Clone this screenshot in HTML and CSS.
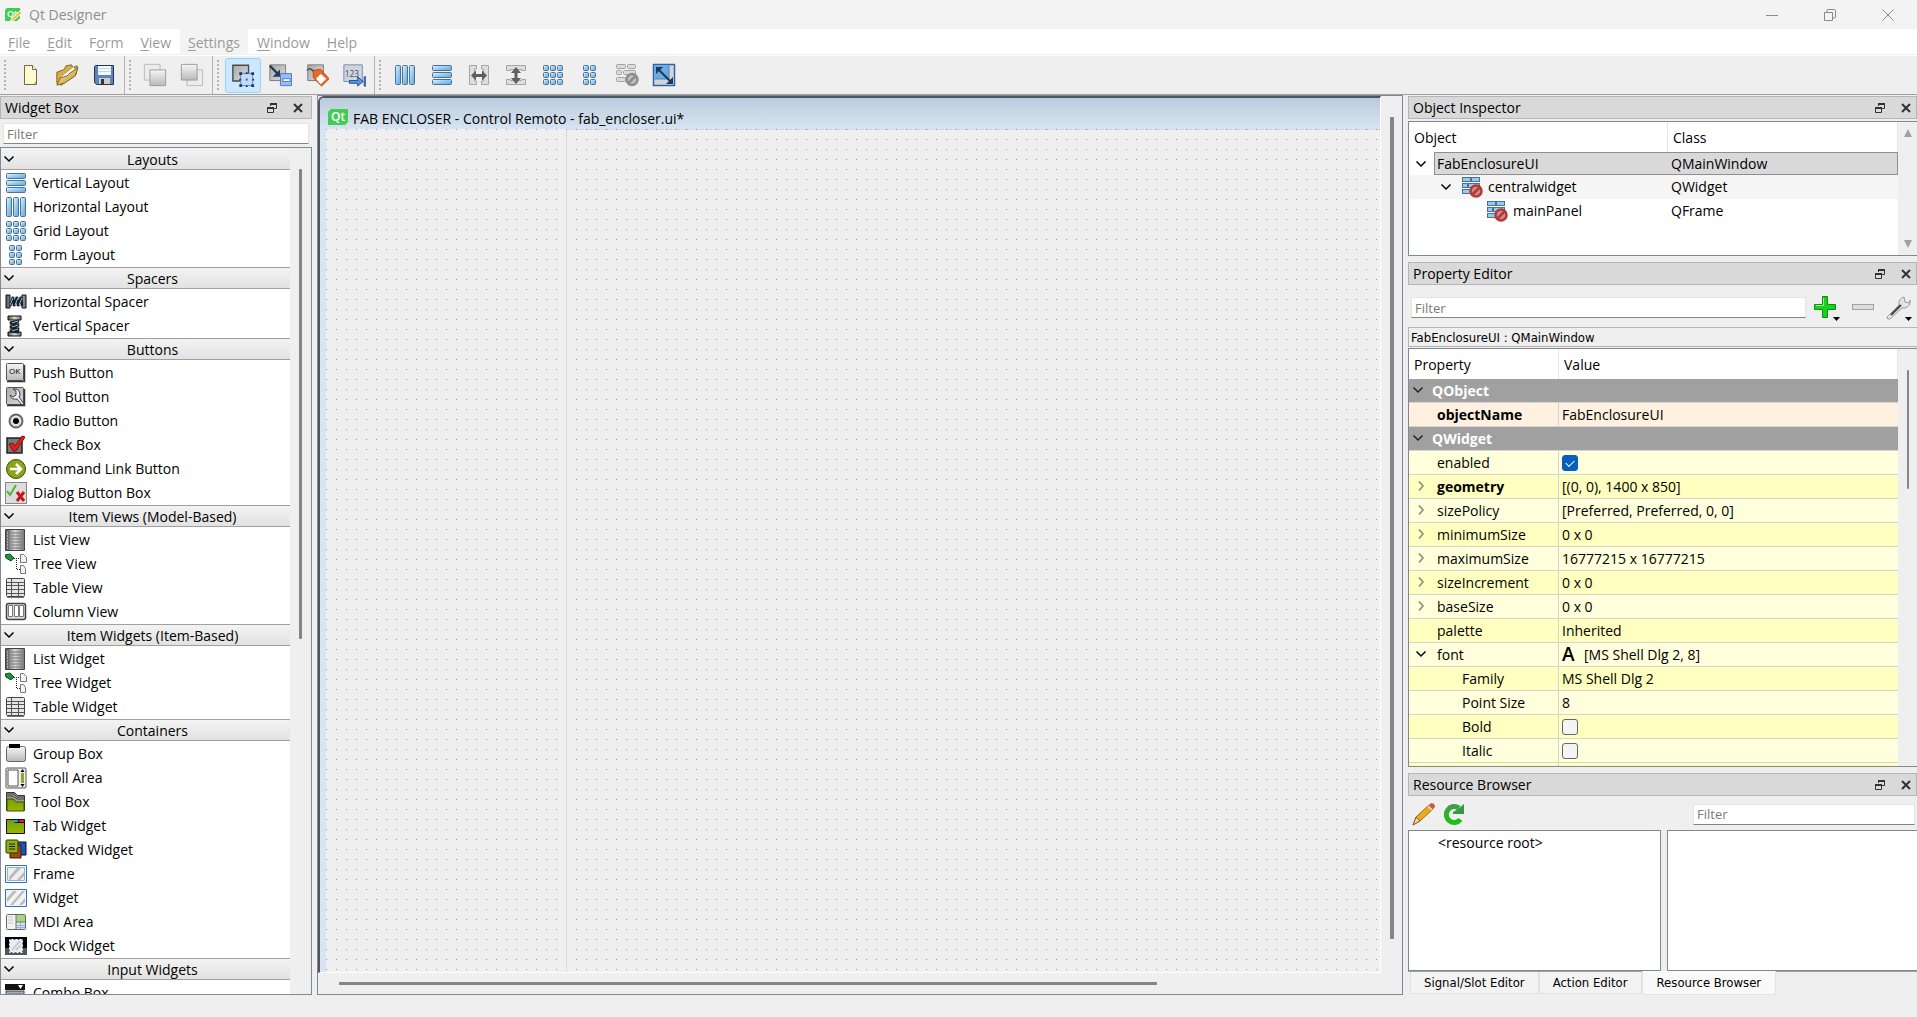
FILE: index.html
```html
<!DOCTYPE html>
<html lang="en">
<head>
<meta charset="utf-8">
<title>Qt Designer</title>
<link rel="stylesheet" href="styles.css">
</head>
<body>
<svg class="sprite" aria-hidden="true">
  <defs>
    <linearGradient id="blue" x1="0" y1="0" x2="1" y2="1"><stop offset="0" stop-color="#e8f7ff"/><stop offset=".5" stop-color="#8dcdf6"/><stop offset="1" stop-color="#6fa3cf"/></linearGradient>
    <linearGradient id="gray" x1="0" y1="0" x2="1" y2="1"><stop offset="0" stop-color="#a9a9a9"/><stop offset="1" stop-color="#dcdcdc"/></linearGradient>
    <linearGradient id="silver" x1="0" y1="0" x2="0" y2="1"><stop offset="0" stop-color="#f6f6f6"/><stop offset="1" stop-color="#b9b9b9"/></linearGradient>
    <linearGradient id="gold" x1="0" y1="0" x2="1" y2="1"><stop offset="0" stop-color="#fff3b0"/><stop offset="1" stop-color="#b98a1e"/></linearGradient>
    <linearGradient id="green" x1="0" y1="0" x2="0" y2="1"><stop offset="0" stop-color="#7d9c00"/><stop offset="1" stop-color="#95b800"/></linearGradient>
    <linearGradient id="emerald" x1="0" y1="0" x2="0" y2="1"><stop offset="0" stop-color="#3f9f49"/><stop offset="1" stop-color="#17c40e"/></linearGradient>
    <linearGradient id="steel" x1="0" y1="0" x2="1" y2="0"><stop offset="0" stop-color="#555"/><stop offset=".5" stop-color="#d8d8d8"/><stop offset="1" stop-color="#777"/></linearGradient>
  </defs>
  <symbol id="i-hbox" viewBox="0 0 22 22"><g fill="url(#blue)" stroke="#536f8f"><rect x="1.5" y="1.5" width="5" height="19" rx="1"/><rect x="8.5" y="1.5" width="5" height="19" rx="1"/><rect x="15.5" y="1.5" width="5" height="19" rx="1"/></g></symbol>
  <symbol id="i-vbox" viewBox="0 0 22 22"><g fill="url(#blue)" stroke="#536f8f"><rect x="1.5" y="1.5" width="19" height="5" rx="1"/><rect x="1.5" y="8.5" width="19" height="5" rx="1"/><rect x="1.5" y="15.5" width="19" height="5" rx="1"/></g></symbol>
  <symbol id="i-grid" viewBox="0 0 22 22"><g fill="url(#blue)" stroke="#536f8f"><rect x="1.5" y="1.5" width="5" height="5" rx="1"/><rect x="8.5" y="1.5" width="5" height="5" rx="1"/><rect x="15.5" y="1.5" width="5" height="5" rx="1"/><rect x="1.5" y="8.5" width="5" height="5" rx="1"/><rect x="8.5" y="8.5" width="5" height="5" rx="1"/><rect x="15.5" y="8.5" width="5" height="5" rx="1"/><rect x="1.5" y="15.5" width="5" height="5" rx="1"/><rect x="8.5" y="15.5" width="5" height="5" rx="1"/><rect x="15.5" y="15.5" width="5" height="5" rx="1"/></g></symbol>
  <symbol id="i-form" viewBox="0 0 22 22"><g fill="url(#blue)" stroke="#536f8f"><rect x="4.5" y="1.5" width="5" height="5" rx="1"/><rect x="11.5" y="1.5" width="5" height="5" rx="1"/><rect x="4.5" y="8.5" width="5" height="5" rx="1"/><rect x="11.5" y="8.5" width="5" height="5" rx="1"/><rect x="4.5" y="15.5" width="5" height="5" rx="1"/><rect x="11.5" y="15.5" width="5" height="5" rx="1"/></g></symbol>
  <symbol id="i-hsplit" viewBox="0 0 22 22"><g fill="#dedede" stroke="#a6a6a6"><path d="M1.5 1.5h7v3.500h-2V17h2v3.500h-7zM20.500 1.500h-7V5h2v12h-2v3.500h7z"/></g><path d="M3 11.500l5-5v3.500h6V6.500l5 5-5 5V13H8v3.500z" fill="#5f5f5f"/></symbol>
  <symbol id="i-vsplit" viewBox="0 0 22 22"><g fill="#dedede" stroke="#a6a6a6"><path d="M1.500 1.500h19v5h-4v-1h-11v1h-4zM1.500 20.500h19v-5h-4v1h-11v-1h-4z"/></g><path d="M11 3l5 6h-3.500v5H16l-5 6-5-6h3.500V9H6z" fill="#5f5f5f"/></symbol>
  <symbol id="i-break" viewBox="0 0 24 24"><g fill="#dcdcdc" stroke="#a3a3a3"><rect x="1.500" y="1.500" width="9" height="4" rx="1"/><rect x="12.500" y="1.500" width="8" height="4" rx="1"/><rect x="1.500" y="7.500" width="5" height="4" rx="1"/><rect x="8.500" y="7.500" width="12" height="4" rx="1"/><rect x="1.500" y="14.500" width="9" height="4" rx="1"/></g><circle cx="17" cy="16.500" r="5.500" fill="#c0c0c0" stroke="#8d8d8d" stroke-width="2.500"/><path d="M13.500 20l7-7" stroke="#8d8d8d" stroke-width="2.500"/></symbol>
  <symbol id="i-nolayout" viewBox="0 0 22 22"><g fill="#8dcdf6" stroke="#536f8f"><rect x="1.500" y="1.500" width="8" height="4"/><rect x="10.500" y="1.500" width="8" height="4"/><rect x="1.500" y="7.500" width="5" height="4"/><rect x="7.500" y="7.500" width="11" height="4"/><rect x="1.500" y="13.500" width="8" height="4"/></g><circle cx="15" cy="15" r="5.500" fill="#cf8a8a" stroke="#b23a36" stroke-width="2.500"/><path d="M11.500 18.500l7-7" stroke="#b23a36" stroke-width="2.500"/></symbol>
  <symbol id="i-adjust" viewBox="0 0 24 24"><rect x="1.500" y="1.500" width="21" height="21" fill="#d2d5d8" stroke="#2f64ad" stroke-width="1.500"/><path d="M2 2h15v14H2z" fill="#6fa9df"/><path d="M17 2v14H2" fill="none" stroke="#4a86c5"/><path d="M6 6l12 12" stroke="#173a5c" stroke-width="2"/><path d="M4 4h7l-7 7zM21 21v-7l-7 7z" fill="#173a5c"/></symbol>
  <symbol id="i-new" viewBox="0 0 24 24"><path d="M6.500 2.500h8l4 4v15h-12z" fill="#fffbcf" stroke="#6f6848"/><path d="M14.500 2.500v4h4" fill="#fff" stroke="#6f6848"/><path d="M16 21l2-3v3z" fill="#c9ad45"/></symbol>
  <symbol id="i-open" viewBox="0 0 26 26"><path d="M2 10l8-3 2-4 6-1 1 3 5-2-1 9-16 12-5-2z" fill="#d9ae3c" stroke="#7d6018"/><path d="M6 15L20 4l2 3L8 18z" fill="#fff" stroke="#999"/><path d="M2 24l4-8 7-2 3-3 9-6-3 9-12 8z" fill="url(#gold)" stroke="#7d6018"/></symbol>
  <symbol id="i-save" viewBox="0 0 22 22"><path d="M1.500 2.500l1-1h18v19h-17l-2-2z" fill="#5b86ba" stroke="#24374f"/><path d="M5 2h13v9H5z" fill="#f3f8ff"/><path d="M5 4.500h13M5 7.500h13" stroke="#c8d4e4"/><path d="M6 14h11v6H6z" fill="#ccc"/><path d="M8 15h3v5H8z" fill="#333"/></symbol>
  <symbol id="i-front" viewBox="0 0 26 26"><path d="M1.500 1.500h17v17h-17z" fill="#ececec" stroke="#b7b7b7"/><path d="M7.500 7.500h17v17h-17z" fill="url(#silver)" stroke="#999"/></symbol>
  <symbol id="i-back" viewBox="0 0 26 26"><path d="M7.500 7.500h17v17h-17z" fill="#ececec" stroke="#b7b7b7"/><path d="M1.500 1.500h17v17h-17z" fill="url(#silver)" stroke="#999"/></symbol>
  <symbol id="i-widgets" viewBox="0 0 26 26"><path d="M2 2.500h17v17H2z" fill="url(#gray)" stroke="#4a4a4a" stroke-width="1.500"/><path d="M10.500 11.500h13v13h-13z" fill="#c5daff" stroke="#5583cb"/><path d="M9 10h3v3H9zM16 10h2v2h-2zM22 10h3v3h-3zM9 17h2v2H9zM23 17h2v2h-2zM9 23h3v3H9zM16 24h2v2h-2zM22 23h3v3h-3z" fill="#173a66"/><path d="M16 17h2v2h-2z" fill="#2852d0"/></symbol>
  <symbol id="i-signals" viewBox="0 0 26 26"><path d="M2 2h17v17H2z" fill="url(#gray)" stroke="#777"/><path d="M2 3l9 9" stroke="#223a53" stroke-width="2.500"/><path d="M13 7v8H5z" fill="#223a53"/><path d="M13.500 11.500h12v13h-12z" fill="#9bbdf5" stroke="#4674c5"/><path d="M16 17h8v3h-8z" fill="#fff" stroke="#4674c5"/></symbol>
  <symbol id="i-buddies" viewBox="0 0 26 26"><path d="M3 2h17v17H3z" fill="url(#gray)" stroke="#777"/><path d="M2 8q4-4 8 2" fill="none" stroke="#444" stroke-width="1.500"/><path d="M9 8l8-1 9 10-8 8-9-9z" fill="#ee6a24" stroke="#a9401b"/><path d="M12 17l5-5 6 5-6 6z" fill="#fff"/></symbol>

  <symbol id="i-hspacer" viewBox="0 0 22 22"><path d="M1 4h4v13H1zM17 4h4v13h-4z" fill="url(#steel)" stroke="#111"/><path d="M5 15l3-9 1 9 3-9 1 9 3-9 1 9" fill="none" stroke="#14202a" stroke-width="2.500"/><path d="M5 14l3-7M10 14l3-7M14 14l3-7" stroke="#94bfd8"/></symbol>
  <symbol id="i-vspacer" viewBox="0 0 22 22"><path d="M3 1h13v4H3zM3 17h13v4H3z" fill="url(#steel)" stroke="#111"/><path d="M14 6L5 8l9 2-9 2 9 2-9 2 9 1" fill="none" stroke="#14202a" stroke-width="3"/><path d="M13 6L7 8M13 10l-6 2M13 14l-6 2" stroke="#94bfd8"/></symbol>
  <symbol id="i-tool" viewBox="0 0 22 22"><rect x="1.500" y="1.500" width="17" height="17" rx="1" fill="url(#gray)" stroke="#555"/><path d="M2 19.500h17.500V3" fill="none" stroke="#333" stroke-width="1.500"/><path d="M8 3q7-1 7 6l-1 2 5 7-2 1-5-6q-6 1-7-4l3 2 3-2 0-4z" fill="#eef2f5" stroke="#38434e"/></symbol>
  <symbol id="i-radio" viewBox="0 0 22 22"><circle cx="11" cy="11" r="6.500" fill="#e2e2e2" stroke="#666" stroke-width="2"/><circle cx="11" cy="11" r="3" fill="#000"/></symbol>
  <symbol id="i-check" viewBox="0 0 22 22"><path d="M2 4h15v15H2z" fill="#777" stroke="#222" stroke-width="1.500"/><path d="M4 10l4-1 2 3 7-10 3 1-9 14H8z" fill="#df2020" stroke="#8c0c0c"/></symbol>
  <symbol id="i-command" viewBox="0 0 22 22"><circle cx="11" cy="11" r="9.500" fill="#8aa51a" stroke="#3b4b0a"/><path d="M5 11h10M11 6l5 5-5 5" fill="none" stroke="#fff" stroke-width="2.500"/></symbol>
  <symbol id="i-dialog" viewBox="0 0 22 22"><rect x=".5" y=".5" width="21" height="21" fill="#ddd" stroke="#888"/><path d="M2 9l3 4 6-10" fill="none" stroke="#55b62b" stroke-width="2"/><path d="M12 10l7 9M19 10l-7 9" stroke="#c5161d" stroke-width="3"/></symbol>
  <symbol id="i-list" viewBox="0 0 22 22"><path d="M.5.5h19v21H.5z" fill="url(#steel)" stroke="#444"/><path d="M4 1v20" stroke="#666"/><path d="M6 4h12M6 7h12M6 10h12M6 13h12M6 16h12M6 19h12" stroke="#777"/><path d="M2 4h1M2 7h1M2 10h1M2 13h1M2 16h1M2 19h1" stroke="#eee"/></symbol>
  <symbol id="i-tree" viewBox="0 0 22 22"><path d="M0 2l5-1 4 4-3 3-5-3z" fill="#22933a" stroke="#0c501b"/><path d="M9 5.500h5M11.500 7v9M12 16.500h3" stroke="#222" stroke-dasharray="1 1"/><path d="M15.500 1.500h3l3 3v5h-6zM15.500 12.500h3l2 3v5h-5z" fill="#f5f5f5" stroke="#777"/></symbol>
  <symbol id="i-table" viewBox="0 0 22 22"><rect x="1.500" y="1.500" width="18" height="18" rx="1" fill="#e6e6e6" stroke="#444"/><path d="M2 5.500h17M2 8.500h17M2 12.500h17M2 16.500h17M6.500 2v18M13.500 5v14" stroke="#555"/><path d="M2 20.500h17" stroke="#777"/></symbol>
  <symbol id="i-column" viewBox="0 0 22 22"><rect x="1.500" y="2.500" width="19" height="16" rx="2" fill="#ddd" stroke="#444" stroke-width="1.500"/><path d="M3.500 4.500h4v11h-4zM9.500 4.500h4v11h-4zM14.500 4.500h4v11h-4z" fill="#fff" stroke="#777"/></symbol>
  <symbol id="i-group" viewBox="0 0 22 22"><rect x="1.500" y="3.500" width="19" height="15" rx="2" fill="url(#silver)" stroke="#666"/><path d="M4 1h11v4H4z" fill="#000"/></symbol>
  <symbol id="i-scroll" viewBox="0 0 22 22"><rect x="1" y="1" width="20" height="20" rx="1" fill="#eee" stroke="#555"/><path d="M3 3h10v16H3z" fill="#fff" stroke="#555"/><path d="M16 6h3v10h-3z" fill="#8eaa16"/><path d="M17.500 2l2 3h-4zM17.500 20l2-3h-4z" fill="#000"/></symbol>
  <symbol id="i-toolbox" viewBox="0 0 22 22"><path d="M1.500 1.500h8l3 3h7v15h-18z" fill="#999" stroke="#333"/><path d="M2 5h6l4 3h7M2 3h7l3 3h7" fill="none" stroke="#444"/><path d="M2 8h6l3 3h8v9H2z" fill="url(#green)" stroke="#3f5000"/></symbol>
  <symbol id="i-tab" viewBox="0 0 22 22"><path d="M1.500 4.500h18v14h-18z" fill="#111" stroke="#111"/><path d="M2 5h6l2 3h9v10H2z" fill="url(#green)"/><path d="M8 5h5v2H8z" fill="#1fa3e8"/><path d="M14 5h5v2h-5z" fill="#e2231a"/></symbol>
  <symbol id="i-stacked" viewBox="0 0 22 22"><path d="M10 3h11v13H10z" fill="#1754c4" stroke="#111"/><path d="M5 6h11v13H5z" fill="#b0430d" stroke="#222"/><rect x="1" y="1" width="12" height="13" rx="1" fill="#8fae10" stroke="#2f3b00"/><path d="M4 5h6M4 7.500h6M4 10h6" stroke="#222"/></symbol>
  <symbol id="i-frame" viewBox="0 0 22 22"><path d="M.5 2.500h21v17H.5z" fill="#fff" stroke="#2e6fbf"/><path d="M2.500 4.500h17v13h-17z" fill="#eee" stroke="#8db2df"/><path d="M4 14l8-9h4L5 17H4zM12 17l7-8v4l-4 4z" fill="#bbb"/></symbol>
  <symbol id="i-widget" viewBox="0 0 22 22"><path d="M.5 2.500h21v17H.5z" fill="#f2f2f2" stroke="#2e6fbf"/><path d="M2 11l6-7h4L2 15zM5 18L17 4h3L8 18zM14 18l6-7v4l-3 3z" fill="#bbb"/></symbol>
  <symbol id="i-mdi" viewBox="0 0 22 22"><path d="M11 4h9v7h-9z" fill="#a8d67e"/><path d="M2 4h9v14H2z" fill="#f2f2f2"/><path d="M11 11h9v7h-9z" fill="#d5e3f7"/><path d="M3 6h5M3 9h5M3 12h5" stroke="#c4c4c4"/><path d="M11 14.500h9M11 16.500h9M15.500 11v7" stroke="#9db4cc"/><path d="M11 4v14M11 11h9" stroke="#777"/><rect x="1.500" y="3.500" width="19" height="15" rx="1" fill="none" stroke="#666"/></symbol>
  <symbol id="i-dock" viewBox="0 0 22 22"><path d="M0 2h22v18H0z" fill="#000"/><path d="M0 13h22v7H0z" fill="#555"/><path d="M4.500 4.500h13v13h-13z" fill="#eee" stroke="#fff"/><path d="M4.500 4.500h13v13h-13z" fill="none" stroke="#2e6fbf" stroke-dasharray="2 2"/><path d="M7 15l8-9M11 15l5-5" stroke="#ccc" stroke-width="2"/></symbol>
  <symbol id="i-combo" viewBox="0 0 22 22"><path d="M0 2h20v6H0z" fill="#111"/><path d="M13 3h5l-2.500 4z" fill="#fff"/><path d="M1 9h18v12H1z" fill="#aaa" stroke="#444"/><path d="M4 11h13v9H4z" fill="#6c95cc"/></symbol>

  <symbol id="i-down" viewBox="0 0 12 12"><path d="M1.500 3.500L6 8l4.500-4.500" fill="none" stroke="currentColor" stroke-width="1.500"/></symbol>
  <symbol id="i-right" viewBox="0 0 12 12"><path d="M4 1.500L8 6l-4 4.500" fill="none" stroke="#858585" stroke-width="1.500"/></symbol>
  <symbol id="i-float" viewBox="0 0 12 12"><path d="M4.500 4V1.500h6v5H8" fill="none" stroke="#333"/><path d="M4 1h7v2H4z" fill="#333"/><path d="M1.500 5.500h6v5h-6z" fill="#ddd" stroke="#333"/><path d="M1 5h7v2H1z" fill="#333"/></symbol>
  <symbol id="i-close" viewBox="0 0 12 12"><path d="M2 2l8 8M10 2l-8 8" stroke="#333" stroke-width="2"/></symbol>
  <symbol id="i-plus" viewBox="0 0 26 26"><path d="M8.500 1.500h5v8h8v5h-8v8h-5v-8h-8v-5h8z" fill="#17d31c" stroke="#0b8e12"/><path d="M9.500 3v7.500H2" fill="none" stroke="#8df58d"/><path d="M19 22h7l-3.500 4z" fill="#000"/></symbol>
  <symbol id="i-minus" viewBox="0 0 26 26"><rect x="2.500" y="9.500" width="21" height="5" fill="#ddd" stroke="#a3a3a3"/></symbol>
  <symbol id="i-wrench" viewBox="0 0 26 26"><path d="M1 22L13 10q-1-6 5-8l1 5 4 1 1-3q1 6-5 8l-3 0L4 24q-3 1-3-2z" fill="#e4e4e4" stroke="#9a9a9a"/><path d="M5 20L15 10" stroke="#444" stroke-width="2"/><path d="M19 22h7l-3.500 4z" fill="#000"/></symbol>
  <symbol id="i-pencil" viewBox="0 0 24 24"><path d="M1 23l3-8L17 3l4 4L8 19z" fill="#f3a521" stroke="#a26a12"/><path d="M1 23l3-8 4 4z" fill="#ecd3a4" stroke="#87653a"/><path d="M17 3l2-2q4 0 4 4l-2 2z" fill="#cf5a3c"/><path d="M16 4l4 4" stroke="#ddd" stroke-width="1.500"/></symbol>
  <symbol id="i-reload" viewBox="0 0 24 24"><path d="M18.500 17.500A8 8 0 1 1 17 6" fill="none" stroke="url(#emerald)" stroke-width="5"/><path d="M22 2v10H11v-2l5-3z" fill="#38993f"/></symbol>
</svg>

<header class="titlebar">
  <svg class="app-icon" viewBox="0 0 18 16"><path d="M3 1h13v10l-3 3H1V3z" fill="#41cd52"/><text x="3" y="10" class="glyph-app">Qt</text><path d="M6 15l2-4 8-7 2 2-8 7z" fill="#f2c230" stroke="#fff"/></svg>
  <h1>Qt Designer</h1>
  <div class="window-buttons">
    <button type="button" aria-label="Minimize"><svg viewBox="0 0 12 12"><path d="M0 6.500h12"/></svg></button>
    <button type="button" aria-label="Restore"><svg viewBox="0 0 12 12"><path d="M.5 3.500h8v8h-8zM3 3V1.500q0-1 1-1h6.500q1 0 1 1V8q0 1-1 1H9"/></svg></button>
    <button type="button" aria-label="Close"><svg viewBox="0 0 12 12"><path d="M.5.5l11 11M11.500.5l-11 11"/></svg></button>
  </div>
</header>
<nav class="menubar">
  <button type="button"><u>F</u>ile</button>
  <button type="button"><u>E</u>dit</button>
  <button type="button">F<u>o</u>rm</button>
  <button type="button"><u>V</u>iew</button>
  <button type="button" class="hover"><u>S</u>ettings</button>
  <button type="button"><u>W</u>indow</button>
  <button type="button"><u>H</u>elp</button>
</nav>
<div class="toolbar">
  <div class="tools">
    <button type="button" aria-label="New"><svg><use href="#i-new"/></svg></button>
    <button type="button" aria-label="Open"><svg><use href="#i-open"/></svg></button>
    <button type="button" aria-label="Save"><svg class="small"><use href="#i-save"/></svg></button>
  </div>
  <div class="tools">
    <button type="button" aria-label="Bring to Front"><svg><use href="#i-front"/></svg></button>
    <button type="button" aria-label="Send to Back"><svg><use href="#i-back"/></svg></button>
  </div>
  <div class="tools">
    <button type="button" class="active" aria-label="Edit Widgets"><svg><use href="#i-widgets"/></svg></button>
    <button type="button" aria-label="Edit Signals/Slots"><svg><use href="#i-signals"/></svg></button>
    <button type="button" aria-label="Edit Buddies"><svg><use href="#i-buddies"/></svg></button>
    <button type="button" aria-label="Edit Tab Order"><svg viewBox="0 0 26 26"><path d="M2 2h20v18H2z" fill="#d4d4d4" stroke="#6a8bbd"/><text x="3" y="15" class="glyph-num">123</text><path d="M8 19h9v-4l6 5-6 5v-3H8zM24 15h2v10h-2z" fill="#5b93df" stroke="#20498c"/></svg></button>
  </div>
  <div class="tools last">
    <button type="button" aria-label="Lay Out Horizontally"><svg class="small"><use href="#i-hbox"/></svg></button>
    <button type="button" aria-label="Lay Out Vertically"><svg class="small"><use href="#i-vbox"/></svg></button>
    <button type="button" aria-label="Horizontal Splitter"><svg class="small"><use href="#i-hsplit"/></svg></button>
    <button type="button" aria-label="Vertical Splitter"><svg class="small"><use href="#i-vsplit"/></svg></button>
    <button type="button" aria-label="Lay Out in a Grid"><svg class="small"><use href="#i-grid"/></svg></button>
    <button type="button" aria-label="Lay Out in a Form"><svg class="small"><use href="#i-form"/></svg></button>
    <button type="button" aria-label="Break Layout"><svg><use href="#i-break"/></svg></button>
    <button type="button" aria-label="Adjust Size"><svg><use href="#i-adjust"/></svg></button>
  </div>
</div>

<main class="workspace">
  <aside class="dock dock-left">
    <div class="dock-title"><h2>Widget Box</h2><button type="button" aria-label="Float"><svg><use href="#i-float"/></svg></button><button type="button" aria-label="Close"><svg><use href="#i-close"/></svg></button></div>
    <input class="filter" type="text" placeholder="Filter" aria-label="Filter widgets">
    <div class="widget-box">
      <div class="widget-list">
        <section>
          <button type="button" class="category"><svg><use href="#i-down"/></svg><span>Layouts</span></button>
          <ul><li><svg><use href="#i-vbox"/></svg>Vertical Layout</li><li><svg><use href="#i-hbox"/></svg>Horizontal Layout</li><li><svg><use href="#i-grid"/></svg>Grid Layout</li><li><svg><use href="#i-form"/></svg>Form Layout</li></ul>
        </section>
        <section>
          <button type="button" class="category"><svg><use href="#i-down"/></svg><span>Spacers</span></button>
          <ul><li><svg><use href="#i-hspacer"/></svg>Horizontal Spacer</li><li><svg><use href="#i-vspacer"/></svg>Vertical Spacer</li></ul>
        </section>
        <section>
          <button type="button" class="category"><svg><use href="#i-down"/></svg><span>Buttons</span></button>
          <ul><li><svg viewBox="0 0 22 22" aria-hidden="true"><rect x="1.500" y="1.500" width="17" height="17" rx="1" fill="url(#silver)" stroke="#555"/><path d="M2 19.500h17.500V3" fill="none" stroke="#333" stroke-width="1.500"/><text x="4" y="12" class="glyph-ok">OK</text></svg>Push Button</li><li><svg><use href="#i-tool"/></svg>Tool Button</li><li><svg><use href="#i-radio"/></svg>Radio Button</li><li><svg><use href="#i-check"/></svg>Check Box</li><li><svg><use href="#i-command"/></svg>Command Link Button</li><li><svg><use href="#i-dialog"/></svg>Dialog Button Box</li></ul>
        </section>
        <section>
          <button type="button" class="category"><svg><use href="#i-down"/></svg><span>Item Views (Model-Based)</span></button>
          <ul><li><svg><use href="#i-list"/></svg>List View</li><li><svg><use href="#i-tree"/></svg>Tree View</li><li><svg><use href="#i-table"/></svg>Table View</li><li><svg><use href="#i-column"/></svg>Column View</li></ul>
        </section>
        <section>
          <button type="button" class="category"><svg><use href="#i-down"/></svg><span>Item Widgets (Item-Based)</span></button>
          <ul><li><svg><use href="#i-list"/></svg>List Widget</li><li><svg><use href="#i-tree"/></svg>Tree Widget</li><li><svg><use href="#i-table"/></svg>Table Widget</li></ul>
        </section>
        <section>
          <button type="button" class="category"><svg><use href="#i-down"/></svg><span>Containers</span></button>
          <ul><li><svg><use href="#i-group"/></svg>Group Box</li><li><svg><use href="#i-scroll"/></svg>Scroll Area</li><li><svg><use href="#i-toolbox"/></svg>Tool Box</li><li><svg><use href="#i-tab"/></svg>Tab Widget</li><li><svg><use href="#i-stacked"/></svg>Stacked Widget</li><li><svg><use href="#i-frame"/></svg>Frame</li><li><svg><use href="#i-widget"/></svg>Widget</li><li><svg><use href="#i-mdi"/></svg>MDI Area</li><li><svg><use href="#i-dock"/></svg>Dock Widget</li></ul>
        </section>
        <section>
          <button type="button" class="category"><svg><use href="#i-down"/></svg><span>Input Widgets</span></button>
          <ul><li><svg><use href="#i-combo"/></svg>Combo Box</li></ul>
        </section>
      </div>
      <div class="scroll-v scroll-widgets"><div class="thumb"></div></div>
    </div>
  </aside>

  <section class="mdi">
    <div class="form-window">
      <div class="form-title"><svg viewBox="0 0 20 16"><path d="M3 0h17v13l-3 3H0V3z" fill="#41cd52"/><text x="3" y="12" class="glyph-qt">Qt</text></svg><h2>FAB ENCLOSER - Control Remoto - fab_encloser.ui*</h2></div>
      <div class="form-canvas"><div class="main-panel"></div></div>
    </div>
    <div class="scroll-v scroll-form"><div class="thumb"></div></div>
    <div class="scroll-h"><div class="thumb"></div></div>
  </section>

  <aside class="dock dock-right">
    <section class="inspector">
      <div class="dock-title"><h2>Object Inspector</h2><button type="button" aria-label="Float"><svg><use href="#i-float"/></svg></button><button type="button" aria-label="Close"><svg><use href="#i-close"/></svg></button></div>
      <div class="view">
        <table class="objects">
          <thead><tr><th>Object</th><th>Class</th></tr></thead>
          <tbody>
            <tr class="selected"><td><div class="node"><svg class="arrow"><use href="#i-down"/></svg><span>FabEnclosureUI</span></div></td><td>QMainWindow</td></tr>
            <tr class="alt"><td><div class="node level-1"><svg class="arrow"><use href="#i-down"/></svg><svg class="kind"><use href="#i-nolayout"/></svg><span>centralwidget</span></div></td><td>QWidget</td></tr>
            <tr><td><div class="node level-2"><svg class="kind"><use href="#i-nolayout"/></svg><span>mainPanel</span></div></td><td>QFrame</td></tr>
          </tbody>
        </table>
        <div class="scroll-v scroll-arrows"><svg viewBox="0 0 8 8"><path d="M4 0l4 8H0z"/></svg><svg viewBox="0 0 8 8"><path d="M4 8l4-8H0z"/></svg></div>
      </div>
    </section>
    <section class="properties">
      <div class="dock-title"><h2>Property Editor</h2><button type="button" aria-label="Float"><svg><use href="#i-float"/></svg></button><button type="button" aria-label="Close"><svg><use href="#i-close"/></svg></button></div>
      <div class="property-tools">
        <input class="filter" type="text" placeholder="Filter" aria-label="Filter properties">
        <button type="button" aria-label="Add dynamic property"><svg><use href="#i-plus"/></svg></button>
        <button type="button" aria-label="Remove dynamic property"><svg><use href="#i-minus"/></svg></button>
        <button type="button" aria-label="Configure property editor"><svg><use href="#i-wrench"/></svg></button>
      </div>
      <p class="object-label">FabEnclosureUI : QMainWindow</p>
      <div class="view">
        <table class="props">
          <thead><tr><th>Property</th><th>Value</th></tr></thead>
          <tbody>
            <tr class="group"><th colspan="2"><svg><use href="#i-down"/></svg>QObject</th></tr>
            <tr class="peach changed"><td>objectName</td><td>FabEnclosureUI</td></tr>
            <tr class="group"><th colspan="2"><svg><use href="#i-down"/></svg>QWidget</th></tr>
            <tr><td><label for="p-enabled">enabled</label></td><td><input type="checkbox" id="p-enabled" checked></td></tr>
            <tr class="deep changed"><td><svg><use href="#i-right"/></svg>geometry</td><td>[(0, 0), 1400 x 850]</td></tr>
            <tr><td><svg><use href="#i-right"/></svg>sizePolicy</td><td>[Preferred, Preferred, 0, 0]</td></tr>
            <tr class="deep"><td><svg><use href="#i-right"/></svg>minimumSize</td><td>0 x 0</td></tr>
            <tr><td><svg><use href="#i-right"/></svg>maximumSize</td><td>16777215 x 16777215</td></tr>
            <tr class="deep"><td><svg><use href="#i-right"/></svg>sizeIncrement</td><td>0 x 0</td></tr>
            <tr><td><svg><use href="#i-right"/></svg>baseSize</td><td>0 x 0</td></tr>
            <tr class="deep"><td>palette</td><td>Inherited</td></tr>
            <tr><td><svg><use href="#i-down"/></svg>font</td><td><span class="font-sample">A</span>[MS Shell Dlg 2, 8]</td></tr>
            <tr class="deep sub"><td>Family</td><td>MS Shell Dlg 2</td></tr>
            <tr class="sub"><td>Point Size</td><td>8</td></tr>
            <tr class="deep sub"><td><label for="p-bold">Bold</label></td><td><input type="checkbox" id="p-bold"></td></tr>
            <tr class="sub"><td><label for="p-italic">Italic</label></td><td><input type="checkbox" id="p-italic"></td></tr>
            <tr class="deep sub"><td></td><td></td></tr>
          </tbody>
        </table>
        <div class="scroll-v scroll-props"><div class="thumb"></div></div>
      </div>
    </section>
    <section class="resources">
      <div class="dock-title"><h2>Resource Browser</h2><button type="button" aria-label="Float"><svg><use href="#i-float"/></svg></button><button type="button" aria-label="Close"><svg><use href="#i-close"/></svg></button></div>
      <div class="resource-tools">
        <button type="button" aria-label="Edit Resources"><svg><use href="#i-pencil"/></svg></button>
        <button type="button" aria-label="Reload"><svg><use href="#i-reload"/></svg></button>
        <input class="filter" type="text" placeholder="Filter" aria-label="Filter resources">
      </div>
      <div class="resource-panes"><div class="pane">&lt;resource root&gt;</div><div class="pane"></div></div>
      <div class="tabs">
        <button type="button">Signal/Slot Editor</button><button type="button">Action Editor</button><button type="button" class="current">Resource Browser</button>
      </div>
    </section>
  </aside>
</main>
</body>
</html>
```
FILE: styles.css
```css
* { box-sizing: border-box; }

body {
  margin: 0;
  height: 100vh;
  display: flex;
  flex-direction: column;
  overflow: hidden;
  background: #efefef;
  color: #000;
  font: 14px/22px "Open Sans", "Noto Sans", sans-serif;
}

h1, h2, p, ul { margin: 0; padding: 0; }
h1, h2 { font-size: 14px; font-weight: 400; }
ul { list-style: none; }
button { padding: 0; border: 0; background: none; color: inherit; font: inherit; }
svg { flex: none; display: block; }
.sprite { position: absolute; width: 0; height: 0; }

.glyph-num { font: 9px "Open Sans", sans-serif; fill: #1d4c9a; }
.glyph-ok { font: 8px "Open Sans", sans-serif; fill: #000; }
.glyph-qt { font: 600 12px "Open Sans", sans-serif; fill: #fff; }
.glyph-app { font: 600 9px "Open Sans", sans-serif; fill: #fff; }

/* Title bar and menus */
.titlebar { flex: none; height: 29px; display: flex; align-items: center; gap: 7px; padding-left: 4px; background: #f3f3f3; color: #8f8f8f; }
.app-icon { width: 18px; height: 16px; }
.window-buttons { margin-left: auto; display: flex; }
.window-buttons button { width: 58px; height: 28px; display: grid; place-items: center; }
.window-buttons svg { width: 12px; height: 12px; fill: none; stroke: #8a8a8a; }

.menubar { flex: none; height: 26px; display: flex; gap: 1px; background: #fff; border-bottom: 1px solid #f0f0f0; color: #9a9a9a; }
.menubar button { padding: 2px 8px 0; }
.menubar .hover { background: #f3f3f3; border-radius: 3px; }
.menubar u { text-underline-offset: 2px; }

/* Tool bar */
.toolbar { flex: none; height: 40px; display: flex; border-top: 1px solid #fff; border-bottom: 1px solid #a0a0a0; }
.tools { display: flex; align-items: center; gap: 1px; padding: 0 2px 0 4px; border-right: 1px solid #b4b4b4; }
.tools.last { border-right: 0; }
.tools::before { content: ""; width: 0; height: 30px; margin-right: 5px; border-left: 2px dotted #b4b4b4; }
.tools button { width: 36px; height: 35px; display: grid; place-items: center; border: 1px solid transparent; border-radius: 3px; }
.tools .active { background: #cce8ff; border-color: #99d1ff; }
.tools svg { width: 24px; height: 24px; }
.tools .small { width: 22px; height: 22px; }

/* Docks */
.workspace { flex: 1; min-height: 0; display: flex; gap: 5px; margin-bottom: 22px; }
.dock { flex: none; display: flex; flex-direction: column; padding-top: 1px; }
.dock-left { width: 312px; }
.dock-right { width: 509px; gap: 6px; }
.dock-title { flex: none; height: 23px; display: flex; align-items: center; background: #d9d9d9; border: 1px solid #b5b5b5; padding: 0 6px 0 4px; }
.dock-right .dock-title { padding-right: 3px; }
.dock-title h2 { flex: 1; padding-top: 1px; }
.dock-title button { width: 14px; height: 14px; display: grid; place-items: center; margin-left: 12px; }
.dock-title svg { width: 12px; height: 12px; }
.filter { height: 21px; padding: 0 3px; border: 1px solid #e4e4e4; border-bottom: 1px solid #858585; background: #fff; font: 13px/18px "Open Sans", sans-serif; }
.filter::placeholder { color: #7a7a7a; opacity: 1; }
.view { flex: 1; min-height: 0; display: flex; border: 1px solid #828790; border-right: 0; overflow: hidden; background: #fff; }

.scroll-v { flex: none; width: 21px; background: #efefef; display: flex; flex-direction: column; align-items: center; }
.dock-right .scroll-v { width: 19px; }
.thumb { background: #858585; border-radius: 1px; }

/* Widget box */
.dock-left .filter { margin: 4px 3px 3px; }
.widget-box { flex: 1; min-height: 0; display: flex; border: 1px solid #828790; background: #fff; overflow: hidden; }
.widget-list { flex: 1; overflow: hidden; }
.category { width: 100%; height: 22px; margin-bottom: 1px; display: flex; align-items: center; padding-left: 2px; background: linear-gradient(#f3f3f3, #e2e2e2); border-top: 1px solid #a0a0a0; border-bottom: 1px solid #a0a0a0; line-height: 20px; }
section:first-child > .category { border-top-color: #f3f3f3; }
.category span { flex: 1; padding-top: 1px; }
.category svg { width: 12px; height: 12px; }
.widget-list li { height: 24px; display: flex; align-items: center; gap: 6px; padding-left: 4px; }
.widget-list li svg { width: 22px; height: 22px; }
.scroll-widgets { padding-top: 21px; }
.scroll-widgets .thumb { width: 3px; height: 57%; }

/* Form window */
.mdi { flex: 1; min-width: 0; display: grid; grid-template: minmax(0, 1fr) 21px / minmax(0, 1fr) 21px; border: 1px solid #828790; }
.form-window { display: flex; flex-direction: column; border-top: 2px solid #4d5560; border-left: 2px solid #4d5560; border-right: 1px solid #fff; border-bottom: 1px solid #fff; border-radius: 6px 0 0 0; background: #d7e4f2; padding-left: 6px; overflow: hidden; }
.form-title { flex: none; height: 31px; display: flex; align-items: flex-end; gap: 5px; margin-left: -6px; padding: 0 8px 0 8px; background: linear-gradient(#bccbdb, #d7e4f2); }
.form-title svg { width: 20px; height: 16px; margin-bottom: 4px; }
.form-title h2 { line-height: 20px; }
.form-canvas { flex: 1; padding-left: 240px; background: conic-gradient(at 1px 1px, transparent 270deg, #999 0) 0 0 / 10px 10px #efefef; }
.main-panel { height: 100%; border-left: 1px dotted #c4c4c4; border-top: 1px dotted #c4c4c4; }
.scroll-form { padding-top: 21px; }
.scroll-form .thumb { width: 4px; height: 96%; }
.scroll-h { grid-column: 1; padding: 9px 224px 0 21px; }
.scroll-h .thumb { height: 3px; }

/* Object inspector */
.inspector { height: 160px; display: flex; flex-direction: column; gap: 2px; }
table { flex: 1; border-collapse: separate; border-spacing: 0; table-layout: fixed; align-self: flex-start; }
th, td { padding: 0; font-weight: 400; text-align: left; overflow: hidden; white-space: nowrap; }
thead th { height: 30px; padding: 2px 0 0 5px; border-right: 1px solid #e4e4e4; }
.objects th:first-child { width: 259px; }
.objects td { height: 24px; padding-left: 3px; line-height: 24px; }
.objects td:first-child { padding-left: 0; }
.objects .selected td { height: 22px; background: #d9d9d9; border: solid #8f8f8f; border-width: 1px 1px 1px 0; line-height: 21px; }
.objects .selected td:first-child { background: none; border: 0; }
.selected span { flex: 1; height: 23px; background: #d9d9d9; border: solid #8f8f8f; border-width: 1px 0 1px 1px; padding-left: 2px; }
.alt td { background: #f5f5f5; }
.node { display: flex; align-items: center; padding-left: 6px; }
.node .arrow { width: 12px; height: 12px; margin-right: 7px; }
.node .kind { width: 22px; height: 22px; margin: 0 5px 0 7px; }
.level-1 { padding-left: 31px; }
.level-1 .arrow { margin-right: 2px; }
.level-2 { padding-left: 70px; }
.scroll-arrows { justify-content: space-between; padding: 7px 0; }
.scroll-arrows svg { width: 8px; height: 8px; fill: #a0a0a0; }

/* Property editor */
.properties { flex: 1; min-height: 0; display: flex; flex-direction: column; }
.property-tools { height: 42px; display: flex; align-items: center; gap: 10px; padding: 3px 5px 0 3px; }
.property-tools .filter { flex: 1; min-width: 0; margin-right: -2px; }
.property-tools svg { width: 26px; height: 26px; }
.object-label { height: 20px; margin-bottom: 1px; padding-left: 2px; border: 1px solid #b5b5b5; border-right: 0; font: 13px/19px "DejaVu Sans Condensed", sans-serif; }
.props th:first-child { width: 150px; }
.props td { height: 24px; border-bottom: 1px solid #d4d4d4; background: #ffffdc; padding-left: 3px; line-height: 23px; }
.props td:first-child { padding-left: 28px; border-right: 1px solid #d4d4d4; }
.props .deep td { background: #ffffbf; }
.props .peach td { background: #fff0df; }
.props .sub td:first-child { padding-left: 53px; }
.props .changed td:first-child { font-weight: 700; }
.props svg { float: left; width: 12px; height: 12px; margin: 5px 0 0 -22px; }
.group th { height: 24px; padding-left: 23px; background: #a0a0a0; border-bottom: 1px solid #d4d4d4; color: #fff; font-weight: 700; line-height: 23px; }
.props .group svg { margin-left: -20px; color: #222; }
.font-sample { float: left; width: 22px; font: 600 19px/22px "Open Sans", sans-serif; }
input[type="checkbox"] { appearance: none; display: block; width: 16px; height: 16px; margin: 0; border: 1px solid #666; border-radius: 3px; background: #f4f4f4; }
input[type="checkbox"]:checked { border-color: #0560ba; background: #0560ba; display: grid; place-items: center; }
input[type="checkbox"]:checked::after { content: ""; width: 7px; height: 4px; border: solid #fff; border-width: 0 0 1px 1px; transform: rotate(-45deg); }
.scroll-props { padding-top: 21px; }
.scroll-props .thumb { width: 2px; height: 30%; }

/* Resource browser */
.resources { flex: none; height: 222px; display: flex; flex-direction: column; }
.resource-tools { height: 34px; display: flex; align-items: center; gap: 6px; padding: 2px 2px 0 4px; }
.resource-tools .filter { width: 222px; margin-left: auto; }
.resource-tools svg { width: 24px; height: 24px; }
.resource-panes { flex: 1; display: grid; grid-template-columns: 253px 1fr; gap: 6px; }
.pane { border: 1px solid #828790; background: #fff; padding: 1px 0 0 29px; }
.pane:last-child { border-right: 0; }
.tabs { height: 24px; display: flex; align-items: flex-start; padding-left: 2px; border-top: 1px solid #a0a0a0; font: 13px/22px "DejaVu Sans Condensed", sans-serif; }
.tabs button { height: 22px; padding: 0 13px; background: #f3f3f3; border: 1px solid #e2e2e2; border-top: 0; }
.tabs .current { height: 24px; margin-top: -1px; padding: 0 14px; background: #f9f9f9; }
```
